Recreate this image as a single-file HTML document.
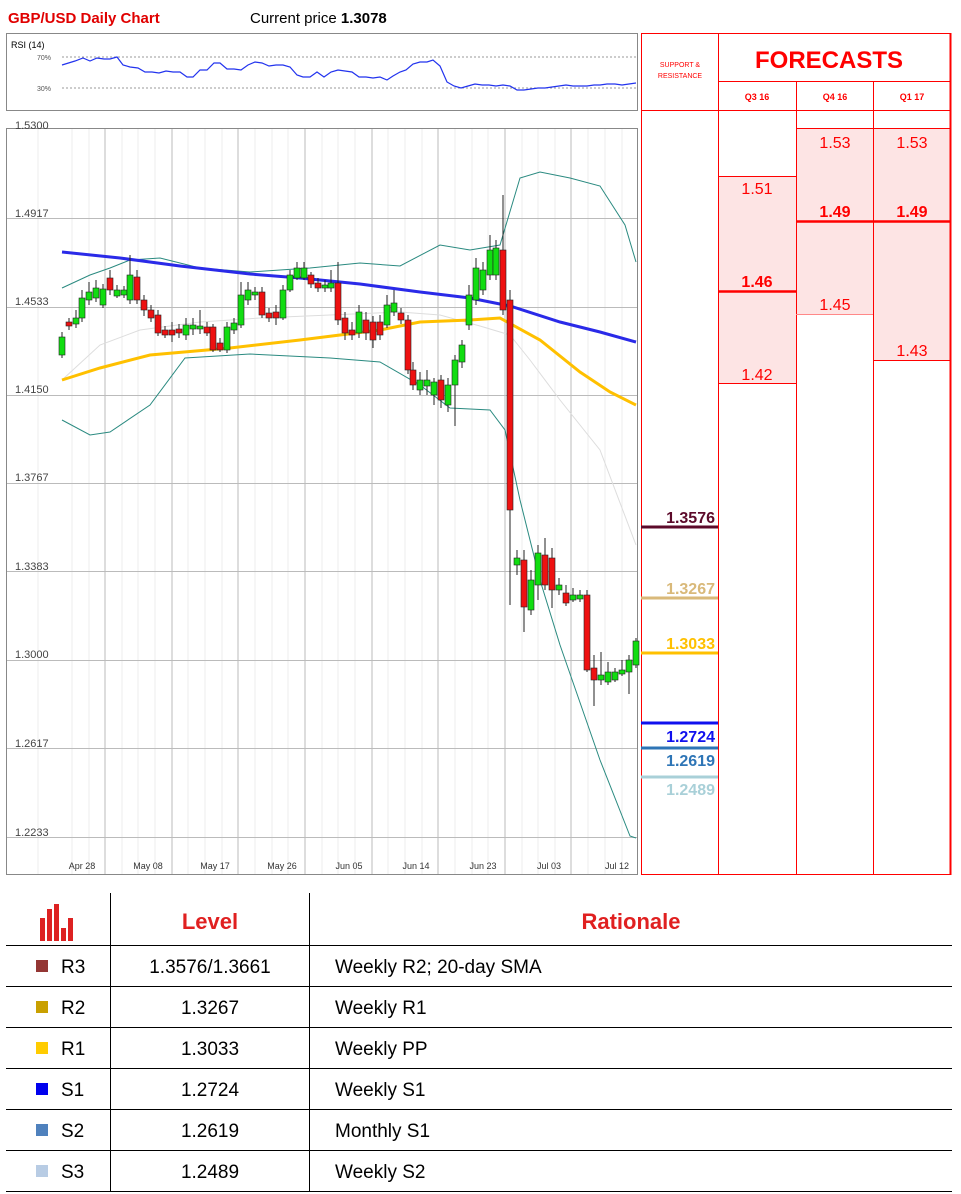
<!DOCTYPE html><html><head><meta charset="utf-8"><style>
body{margin:0;background:#fff;width:961px;height:1194px;overflow:hidden}
svg{display:block}
text{font-family:"Liberation Sans",sans-serif}
</style></head><body>
<svg width="961" height="1194" viewBox="0 0 961 1194" xmlns="http://www.w3.org/2000/svg">
<!-- title -->
<text x="8" y="23" font-size="15" font-weight="bold" fill="#e00000">GBP/USD Daily Chart</text>
<text x="250" y="23" font-size="15" fill="#000">Current price <tspan font-weight="bold">1.3078</tspan></text>
<!-- RSI -->
<rect x="6.5" y="33.5" width="631" height="77" fill="#fff" stroke="#888"/>
<text x="11" y="48" font-size="9" fill="#000">RSI (14)</text>
<text x="37" y="60" font-size="7" fill="#555">70%</text>
<text x="37" y="91" font-size="7" fill="#555">30%</text>
<line x1="62" y1="57" x2="636" y2="57" stroke="#777" stroke-dasharray="2,2" stroke-width=".7"/>
<line x1="62" y1="88" x2="636" y2="88" stroke="#777" stroke-dasharray="2,2" stroke-width=".7"/>
<polyline fill="none" stroke="#2233ee" stroke-width="1.2" points="62,65 75,61 83,58 90,61 97,58 104,59 110,59 117,57 123,65 130,67 138,68 145,72 152,72 159,73 166,71 173,72 180,72 187,77 193,77 200,70 207,70 214,63 220,63 227,69 234,69 241,70 248,65 255,62 262,63 269,66 276,65 283,65 290,67 297,75 303,77 310,77 317,72 324,77 331,72 338,70 345,71 352,72 359,77 366,77 373,78 380,77 387,80 393,76 400,72 406,70 413,64 420,62 427,62 433,60 440,66 447,82 454,86 461,88 468,86 475,84 482,85 489,85 496,86 503,85 510,86 517,90 524,90 531,89 538,88 545,88 552,87 559,86 566,85 573,86 580,86 587,86 594,85 600,85 607,84 615,84 622,85 629,84 636,83"/>
<!-- Main chart -->
<rect x="6.5" y="128.5" width="631" height="746" fill="#fff" stroke="#888"/>
<g stroke="#eee" stroke-width="1">
<line x1="38" y1="129" x2="38" y2="874"/><line x1="72" y1="129" x2="72" y2="874"/>
<line x1="89" y1="129" x2="89" y2="874"/><line x1="122" y1="129" x2="122" y2="874"/>
<line x1="138" y1="129" x2="138" y2="874"/><line x1="155" y1="129" x2="155" y2="874"/>
<line x1="188" y1="129" x2="188" y2="874"/><line x1="205" y1="129" x2="205" y2="874"/>
<line x1="222" y1="129" x2="222" y2="874"/><line x1="255" y1="129" x2="255" y2="874"/>
<line x1="272" y1="129" x2="272" y2="874"/><line x1="288" y1="129" x2="288" y2="874"/>
<line x1="322" y1="129" x2="322" y2="874"/><line x1="338" y1="129" x2="338" y2="874"/>
<line x1="355" y1="129" x2="355" y2="874"/><line x1="388" y1="129" x2="388" y2="874"/>
<line x1="405" y1="129" x2="405" y2="874"/><line x1="422" y1="129" x2="422" y2="874"/>
<line x1="455" y1="129" x2="455" y2="874"/><line x1="472" y1="129" x2="472" y2="874"/>
<line x1="488" y1="129" x2="488" y2="874"/><line x1="522" y1="129" x2="522" y2="874"/>
<line x1="538" y1="129" x2="538" y2="874"/><line x1="555" y1="129" x2="555" y2="874"/>
<line x1="588" y1="129" x2="588" y2="874"/><line x1="605" y1="129" x2="605" y2="874"/>
<line x1="622" y1="129" x2="622" y2="874"/>
</g>
<g stroke="#bbb" stroke-width="1">
<line x1="105" y1="129" x2="105" y2="874"/><line x1="172" y1="129" x2="172" y2="874"/>
<line x1="238" y1="129" x2="238" y2="874"/><line x1="305" y1="129" x2="305" y2="874"/>
<line x1="372" y1="129" x2="372" y2="874"/><line x1="438" y1="129" x2="438" y2="874"/>
<line x1="505" y1="129" x2="505" y2="874"/><line x1="571" y1="129" x2="571" y2="874"/>
<line x1="7" y1="218.5" x2="637" y2="218.5"/><line x1="7" y1="307.5" x2="637" y2="307.5"/>
<line x1="7" y1="395.5" x2="637" y2="395.5"/><line x1="7" y1="483.5" x2="637" y2="483.5"/>
<line x1="7" y1="571.5" x2="637" y2="571.5"/><line x1="7" y1="660.5" x2="637" y2="660.5"/>
<line x1="7" y1="748.5" x2="637" y2="748.5"/><line x1="7" y1="837.5" x2="637" y2="837.5"/>
</g>
<g font-size="11" fill="#444">
<text x="15" y="129">1.5300</text><text x="15" y="217">1.4917</text>
<text x="15" y="305">1.4533</text><text x="15" y="393">1.4150</text>
<text x="15" y="481">1.3767</text><text x="15" y="570">1.3383</text>
<text x="15" y="658">1.3000</text><text x="15" y="747">1.2617</text>
<text x="15" y="836">1.2233</text>
</g>
<g font-size="9" fill="#333" text-anchor="middle">
<text x="82" y="869">Apr 28</text><text x="148" y="869">May 08</text><text x="215" y="869">May 17</text>
<text x="282" y="869">May 26</text><text x="349" y="869">Jun 05</text><text x="416" y="869">Jun 14</text>
<text x="483" y="869">Jun 23</text><text x="549" y="869">Jul 03</text><text x="617" y="869">Jul 12</text>
</g>
<!-- bands -->
<polyline fill="none" stroke="#ddd" stroke-width="1" points="62,380 100,345 140,330 200,322 260,318 330,315 400,312 440,315 480,326 510,335 530,360 560,400 600,450 636,545"/>
<polyline fill="none" stroke="#2a8a80" stroke-width="1" points="62,288 90,275 110,268 130,260 160,258 200,268 250,272 310,268 360,263 400,266 440,245 470,250 500,245 520,178 540,172 570,178 600,186 625,225 636,262"/>
<polyline fill="none" stroke="#2a8a80" stroke-width="1" points="62,420 90,435 110,432 150,405 185,358 250,354 330,358 380,362 420,385 450,408 490,410 505,430 520,500 540,580 560,645 600,760 630,836 636,838"/>
<polyline fill="none" stroke="#ffc000" stroke-width="3" points="62,380 100,368 150,355 230,348 300,340 380,330 420,322 470,320 500,318 540,340 580,372 610,392 636,405"/>
<polyline fill="none" stroke="#2a2ae8" stroke-width="3" points="62,252 120,258 180,266 250,274 300,278 360,284 420,292 470,298 510,306 560,322 600,332 636,342"/>
<!-- candles -->
<g stroke="#222" stroke-width="1">
<line x1="62" y1="332" x2="62" y2="358"/><line x1="69" y1="318" x2="69" y2="330"/><line x1="76" y1="310" x2="76" y2="328"/><line x1="82" y1="290" x2="82" y2="322"/><line x1="89" y1="282" x2="89" y2="305"/><line x1="96" y1="280" x2="96" y2="302"/><line x1="103" y1="284" x2="103" y2="308"/><line x1="110" y1="270" x2="110" y2="295"/><line x1="117" y1="285" x2="117" y2="298"/><line x1="124" y1="286" x2="124" y2="298"/><line x1="130" y1="255" x2="130" y2="304"/><line x1="137" y1="270" x2="137" y2="304"/><line x1="144" y1="295" x2="144" y2="316"/><line x1="151" y1="305" x2="151" y2="322"/><line x1="158" y1="310" x2="158" y2="336"/><line x1="165" y1="326" x2="165" y2="338"/><line x1="172" y1="322" x2="172" y2="342"/><line x1="179" y1="324" x2="179" y2="338"/><line x1="186" y1="318" x2="186" y2="340"/><line x1="193" y1="318" x2="193" y2="335"/><line x1="200" y1="310" x2="200" y2="334"/><line x1="207" y1="322" x2="207" y2="336"/><line x1="213" y1="324" x2="213" y2="352"/><line x1="220" y1="338" x2="220" y2="352"/><line x1="227" y1="322" x2="227" y2="353"/><line x1="234" y1="318" x2="234" y2="334"/><line x1="241" y1="282" x2="241" y2="328"/><line x1="248" y1="282" x2="248" y2="305"/><line x1="255" y1="287" x2="255" y2="300"/><line x1="262" y1="287" x2="262" y2="318"/><line x1="269" y1="308" x2="269" y2="322"/><line x1="276" y1="305" x2="276" y2="325"/><line x1="283" y1="285" x2="283" y2="320"/><line x1="290" y1="270" x2="290" y2="292"/><line x1="297" y1="262" x2="297" y2="280"/><line x1="304" y1="262" x2="304" y2="280"/><line x1="311" y1="272" x2="311" y2="288"/><line x1="318" y1="278" x2="318" y2="292"/><line x1="325" y1="280" x2="325" y2="292"/><line x1="331" y1="270" x2="331" y2="292"/><line x1="338" y1="262" x2="338" y2="325"/><line x1="345" y1="312" x2="345" y2="340"/><line x1="352" y1="322" x2="352" y2="340"/><line x1="359" y1="305" x2="359" y2="338"/><line x1="366" y1="312" x2="366" y2="340"/><line x1="373" y1="316" x2="373" y2="348"/><line x1="380" y1="315" x2="380" y2="340"/><line x1="387" y1="295" x2="387" y2="328"/><line x1="394" y1="290" x2="394" y2="316"/><line x1="401" y1="308" x2="401" y2="324"/><line x1="408" y1="315" x2="408" y2="374"/><line x1="413" y1="362" x2="413" y2="390"/><line x1="420" y1="372" x2="420" y2="395"/><line x1="427" y1="370" x2="427" y2="395"/><line x1="434" y1="378" x2="434" y2="405"/><line x1="441" y1="375" x2="441" y2="408"/><line x1="448" y1="378" x2="448" y2="412"/><line x1="455" y1="355" x2="455" y2="426"/><line x1="462" y1="340" x2="462" y2="368"/><line x1="469" y1="285" x2="469" y2="330"/><line x1="476" y1="258" x2="476" y2="305"/><line x1="483" y1="262" x2="483" y2="295"/><line x1="490" y1="235" x2="490" y2="280"/><line x1="496" y1="240" x2="496" y2="280"/><line x1="503" y1="195" x2="503" y2="315"/><line x1="510" y1="290" x2="510" y2="605"/><line x1="517" y1="550" x2="517" y2="575"/><line x1="524" y1="550" x2="524" y2="632"/><line x1="531" y1="570" x2="531" y2="615"/><line x1="538" y1="545" x2="538" y2="600"/><line x1="545" y1="538" x2="545" y2="590"/><line x1="552" y1="548" x2="552" y2="608"/><line x1="559" y1="578" x2="559" y2="595"/><line x1="566" y1="585" x2="566" y2="606"/><line x1="573" y1="588" x2="573" y2="602"/><line x1="580" y1="590" x2="580" y2="602"/><line x1="587" y1="590" x2="587" y2="672"/><line x1="594" y1="655" x2="594" y2="706"/><line x1="601" y1="652" x2="601" y2="685"/><line x1="608" y1="662" x2="608" y2="685"/><line x1="615" y1="668" x2="615" y2="682"/><line x1="622" y1="660" x2="622" y2="676"/><line x1="629" y1="655" x2="629" y2="694"/><line x1="636" y1="638" x2="636" y2="668"/>
</g>
<g fill="#11dd11" stroke="#222" stroke-width=".6">
<rect x="59" y="337" width="6" height="18"/><rect x="73" y="318" width="6" height="6"/><rect x="79" y="298" width="6" height="20"/><rect x="86" y="292" width="6" height="8"/><rect x="93" y="288" width="6" height="10"/><rect x="100" y="289" width="6" height="16"/><rect x="114" y="290" width="6" height="6"/><rect x="121" y="290" width="6" height="5"/><rect x="127" y="275" width="6" height="25"/><rect x="183" y="325" width="6" height="10"/><rect x="190" y="325" width="6" height="4"/><rect x="197" y="326" width="6" height="3"/><rect x="224" y="327" width="6" height="23"/><rect x="231" y="323" width="6" height="7"/><rect x="238" y="295" width="6" height="30"/><rect x="245" y="290" width="6" height="10"/><rect x="252" y="292" width="6" height="3"/><rect x="280" y="290" width="6" height="28"/><rect x="287" y="275" width="6" height="15"/><rect x="294" y="268" width="6" height="10"/><rect x="301" y="268" width="6" height="10"/><rect x="322" y="285" width="6" height="3"/><rect x="328" y="283" width="6" height="5"/><rect x="356" y="312" width="6" height="21"/><rect x="384" y="305" width="6" height="20"/><rect x="391" y="303" width="6" height="9"/><rect x="417" y="380" width="6" height="10"/><rect x="424" y="380" width="6" height="6"/><rect x="431" y="382" width="6" height="13"/><rect x="445" y="385" width="6" height="20"/><rect x="452" y="360" width="6" height="25"/><rect x="459" y="345" width="6" height="17"/><rect x="466" y="295" width="6" height="30"/><rect x="473" y="268" width="6" height="32"/><rect x="480" y="270" width="6" height="20"/><rect x="487" y="250" width="6" height="25"/><rect x="493" y="248" width="6" height="27"/><rect x="514" y="558" width="6" height="7"/><rect x="528" y="580" width="6" height="30"/><rect x="535" y="553" width="6" height="32"/><rect x="556" y="585" width="6" height="5"/><rect x="570" y="595" width="6" height="5"/><rect x="577" y="595" width="6" height="4"/><rect x="598" y="675" width="6" height="5"/><rect x="605" y="672" width="6" height="10"/><rect x="612" y="672" width="6" height="8"/><rect x="619" y="670" width="6" height="4"/><rect x="626" y="660" width="6" height="12"/><rect x="633" y="641" width="6" height="24"/>
</g>
<g fill="#ee1111" stroke="#222" stroke-width=".6">
<rect x="66" y="322" width="6" height="4"/><rect x="107" y="278" width="6" height="12"/><rect x="134" y="277" width="6" height="23"/><rect x="141" y="300" width="6" height="10"/><rect x="148" y="310" width="6" height="8"/><rect x="155" y="315" width="6" height="18"/><rect x="162" y="330" width="6" height="5"/><rect x="169" y="330" width="6" height="5"/><rect x="176" y="329" width="6" height="4"/><rect x="204" y="327" width="6" height="6"/><rect x="210" y="327" width="6" height="23"/><rect x="217" y="343" width="6" height="7"/><rect x="259" y="292" width="6" height="23"/><rect x="266" y="313" width="6" height="5"/><rect x="273" y="312" width="6" height="6"/><rect x="308" y="275" width="6" height="9"/><rect x="315" y="283" width="6" height="5"/><rect x="335" y="283" width="6" height="37"/><rect x="342" y="318" width="6" height="15"/><rect x="349" y="330" width="6" height="5"/><rect x="363" y="320" width="6" height="13"/><rect x="370" y="322" width="6" height="18"/><rect x="377" y="322" width="6" height="13"/><rect x="398" y="313" width="6" height="7"/><rect x="405" y="320" width="6" height="50"/><rect x="410" y="370" width="6" height="15"/><rect x="438" y="380" width="6" height="20"/><rect x="500" y="250" width="6" height="60"/><rect x="507" y="300" width="6" height="210"/><rect x="521" y="560" width="6" height="47"/><rect x="542" y="555" width="6" height="30"/><rect x="549" y="558" width="6" height="32"/><rect x="563" y="593" width="6" height="10"/><rect x="584" y="595" width="6" height="75"/><rect x="591" y="668" width="6" height="12"/>
</g>
<!-- Right panel -->
<rect x="719" y="176" width="77" height="207" fill="#fde4e4"/>
<rect x="796" y="128" width="77" height="187" fill="#fde4e4"/>
<rect x="873" y="128" width="77" height="232" fill="#fde4e4"/>
<g stroke="#f00" stroke-width="1" fill="none">
<rect x="641.5" y="33.5" width="309" height="841"/>
<line x1="718.5" y1="33" x2="718.5" y2="875"/>
<line x1="796.5" y1="81" x2="796.5" y2="875"/>
<line x1="873.5" y1="81" x2="873.5" y2="875"/>
<line x1="718" y1="81.5" x2="951" y2="81.5"/>
<line x1="641" y1="110.5" x2="951" y2="110.5"/>
<line x1="796" y1="128.5" x2="951" y2="128.5"/>
<line x1="718" y1="176.5" x2="796" y2="176.5"/>
<line x1="718" y1="383.5" x2="796" y2="383.5"/>
<line x1="873" y1="360.5" x2="951" y2="360.5"/>
</g>
<line x1="796" y1="314.5" x2="873" y2="314.5" stroke="#f88" stroke-width="1"/>
<line x1="718" y1="291.5" x2="796" y2="291.5" stroke="#f00" stroke-width="2.5"/>
<line x1="796" y1="221.5" x2="951" y2="221.5" stroke="#f00" stroke-width="2.5"/>
<line x1="950.5" y1="33" x2="950.5" y2="875" stroke="#f00" stroke-width="2"/>
<g fill="#f00" text-anchor="middle">
<text x="680" y="67" font-size="7">SUPPORT &amp;</text>
<text x="680" y="78" font-size="7">RESISTANCE</text>
<text x="829" y="68" font-size="24" font-weight="bold">FORECASTS</text>
<text x="757" y="100" font-size="9" font-weight="bold">Q3 16</text>
<text x="835" y="100" font-size="9" font-weight="bold">Q4 16</text>
<text x="912" y="100" font-size="9" font-weight="bold">Q1 17</text>
<g font-size="16">
<text x="835" y="148">1.53</text><text x="912" y="148">1.53</text>
<text x="757" y="194">1.51</text>
<text x="835" y="217" font-weight="bold">1.49</text><text x="912" y="217" font-weight="bold">1.49</text>
<text x="757" y="287" font-weight="bold">1.46</text>
<text x="835" y="310">1.45</text>
<text x="912" y="356">1.43</text>
<text x="757" y="380">1.42</text>
</g></g>
<line x1="641" y1="527" x2="718" y2="527" stroke="#5c0a2a" stroke-width="3"/>
<line x1="641" y1="598" x2="718" y2="598" stroke="#d9b97a" stroke-width="3"/>
<line x1="641" y1="653" x2="718" y2="653" stroke="#ffc000" stroke-width="3"/>
<line x1="641" y1="723" x2="718" y2="723" stroke="#1010ee" stroke-width="3"/>
<line x1="641" y1="748" x2="718" y2="748" stroke="#2e75b6" stroke-width="3"/>
<line x1="641" y1="777" x2="718" y2="777" stroke="#a9d0d8" stroke-width="3"/>
<g font-size="16" font-weight="bold" text-anchor="end">
<text x="715" y="523" fill="#5c0a2a">1.3576</text>
<text x="715" y="594" fill="#d9b97a">1.3267</text>
<text x="715" y="649" fill="#ffc000">1.3033</text>
<text x="715" y="742" fill="#1010ee">1.2724</text>
<text x="715" y="766" fill="#2e75b6">1.2619</text>
<text x="715" y="795" fill="#a9d0d8">1.2489</text>
</g>
<!-- bottom table -->
<g fill="#dd2222">
<rect x="40" y="918" width="5" height="23"/><rect x="47" y="909" width="5" height="32"/><rect x="54" y="904" width="5" height="37"/><rect x="61" y="928" width="5" height="13"/><rect x="68" y="918" width="5" height="23"/>
</g>
<g stroke="#000" stroke-width="1">
<line x1="110.5" y1="893" x2="110.5" y2="1192"/><line x1="309.5" y1="893" x2="309.5" y2="1192"/>
<line x1="6" y1="945.5" x2="952" y2="945.5"/><line x1="6" y1="986.5" x2="952" y2="986.5"/>
<line x1="6" y1="1027.5" x2="952" y2="1027.5"/><line x1="6" y1="1068.5" x2="952" y2="1068.5"/>
<line x1="6" y1="1109.5" x2="952" y2="1109.5"/><line x1="6" y1="1150.5" x2="952" y2="1150.5"/>
<line x1="6" y1="1191.5" x2="952" y2="1191.5"/>
</g>
<g font-size="22" font-weight="bold" fill="#e02020" text-anchor="middle">
<text x="210" y="929">Level</text><text x="631" y="929">Rationale</text>
</g>
<rect x="36" y="960" width="12" height="12" fill="#943634"/>
<rect x="36" y="1001" width="12" height="12" fill="#c9a000"/>
<rect x="36" y="1042" width="12" height="12" fill="#ffcc00"/>
<rect x="36" y="1083" width="12" height="12" fill="#0000ee"/>
<rect x="36" y="1124" width="12" height="12" fill="#4f81bd"/>
<rect x="36" y="1165" width="12" height="12" fill="#b8cce4"/>
<g font-size="19" fill="#000">
<text x="61" y="973">R3</text><text x="61" y="1014">R2</text><text x="61" y="1055">R1</text>
<text x="61" y="1096">S1</text><text x="61" y="1137">S2</text><text x="61" y="1178">S3</text>
<g text-anchor="middle">
<text x="210" y="973">1.3576/1.3661</text><text x="210" y="1014">1.3267</text><text x="210" y="1055">1.3033</text>
<text x="210" y="1096">1.2724</text><text x="210" y="1137">1.2619</text><text x="210" y="1178">1.2489</text>
</g>
<text x="335" y="973">Weekly R2; 20-day SMA</text><text x="335" y="1014">Weekly R1</text>
<text x="335" y="1055">Weekly PP</text><text x="335" y="1096">Weekly S1</text>
<text x="335" y="1137">Monthly S1</text><text x="335" y="1178">Weekly S2</text>
</g>
</svg>
</body></html>
